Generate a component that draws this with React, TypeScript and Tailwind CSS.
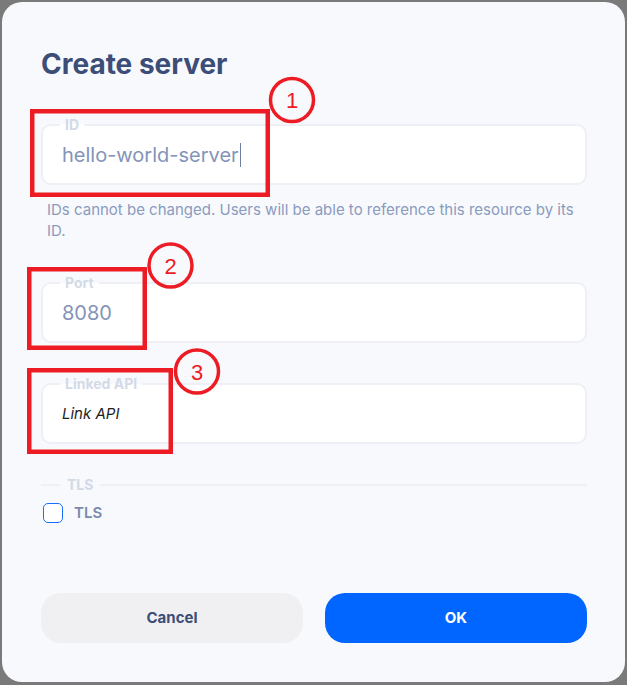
import React from "react"

const font = { fontFamily: "Inter, 'Noto Sans', sans-serif" }

function Field({ label, children }: { label: string; children: React.ReactNode }) {
  return (
    <div className="relative h-[61px] rounded-[10px] border-2 border-[#eef0f6] bg-white">
      <span className="absolute -top-[10px] left-[17px] bg-[linear-gradient(to_bottom,#f8f9fc_50%,#ffffff_50%)] px-[5px] text-[14px] font-bold leading-[17px] text-[#d3dae7]">
        {label}
      </span>
      <div className="flex h-full items-center pl-[19px]">{children}</div>
    </div>
  )
}

function Annotations() {
  const red = "#ed1c24"
  const circles = [
    { cx: 292, cy: 100, n: "1" },
    { cx: 170.5, cy: 265.5, n: "2" },
    { cx: 197, cy: 371.5, n: "3" },
  ]
  return (
    <svg className="pointer-events-none absolute inset-0" width="627" height="685">
      <rect x="32.25" y="111.25" width="235.5" height="83.5" fill="none" stroke={red} strokeWidth="4.5" />
      <rect x="29.25" y="269.25" width="115.5" height="78.5" fill="none" stroke={red} strokeWidth="4.5" />
      <rect x="29.25" y="370.25" width="141.5" height="81.5" fill="none" stroke={red} strokeWidth="4.5" />
      {circles.map((c) => (
        <g key={c.n}>
          <circle cx={c.cx} cy={c.cy} r="21.5" fill="none" stroke={red} strokeWidth="3.5" />
          <text
            x={c.cx}
            y={c.cy + 8}
            textAnchor="middle"
            fill={red}
            fontSize="22"
            fontFamily="'Liberation Sans', sans-serif"
          >
            {c.n}
          </text>
        </g>
      ))}
    </svg>
  )
}

export default function App() {
  return (
    <div className="relative h-[685px] w-[627px] bg-[#7a7a7a] pl-[2px] pt-[2px]" style={font}>
      <div className="h-[680px] w-[623px] rounded-[20px] bg-[#f8f9fc] pl-[39px] pr-[38px] pt-[45px]">
        <h1 className="text-[28px] font-bold leading-[34px] text-[#3c4e78]">Create server</h1>

        <div className="mt-[43px]">
          <Field label="ID">
            <span className="text-[20px] leading-[24px] text-[#8494b8]">hello-world-server</span>
            <span className="ml-[1px] h-[24px] w-px bg-[#6f7ea3]" />
          </Field>
        </div>

        <p className="mt-[14px] pl-[6px] text-[15px] leading-[21px] text-[#8a9bbf]">
          IDs cannot be changed. Users will be able to reference this resource by its ID.
        </p>

        <div className="mt-[41px]">
          <Field label="Port">
            <span className="text-[20px] leading-[24px] text-[#8494b8]">8080</span>
          </Field>
        </div>

        <div className="mt-[40px]">
          <Field label="Linked API">
            <span className="text-[15px] italic leading-[20px] text-[#1e1e1e]">Link API</span>
          </Field>
        </div>

        <div className="mt-[32px] flex items-center">
          <div className="h-[2px] w-[19px] bg-[#eef0f6]" />
          <span className="px-[7px] text-[14px] font-bold leading-[17px] text-[#d3dae7]">TLS</span>
          <div className="h-[2px] flex-1 bg-[#eef0f6]" />
        </div>

        <label className="mt-[10px] flex items-center gap-[11px] pl-[2px]">
          <span className="h-[20px] w-[20px] rounded-[5px] border-[1.5px] border-[#1a6dff] bg-white" />
          <span className="text-[15px] font-semibold leading-[20px] text-[#7a8aae]">TLS</span>
        </label>

        <div className="mt-[70px] flex gap-[22px]">
          <button className="h-[50px] flex-1 rounded-[20px] bg-[#f0f0f3] text-[15px] font-bold text-[#3c4e78]">
            Cancel
          </button>
          <button className="h-[50px] flex-1 rounded-[20px] bg-[#0066ff] text-[15px] font-bold text-white">
            OK
          </button>
        </div>
      </div>
      <Annotations />
    </div>
  )
}
